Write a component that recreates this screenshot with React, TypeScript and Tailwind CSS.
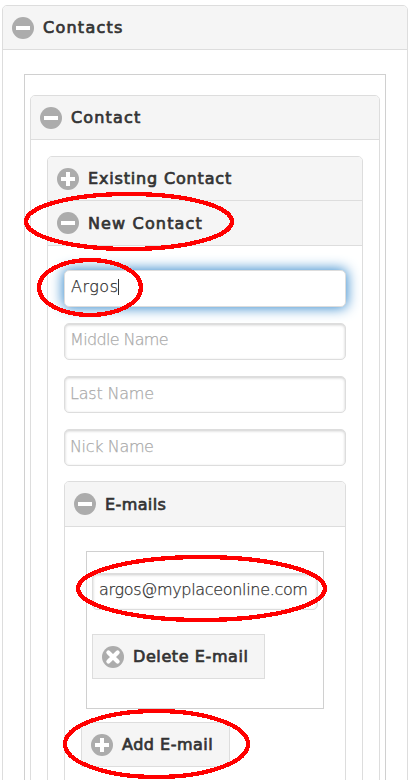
import type { ReactNode } from "react";

type Glyph = "minus" | "plus" | "delete";

function CircleIcon({ glyph }: { glyph: Glyph }) {
  return (
    <svg width="22" height="22" viewBox="0 0 22 22" className="shrink-0" aria-hidden="true">
      <circle cx="11" cy="11" r="11" fill="#acacac" />
      {glyph === "minus" && <path d="M4 9h14v4H4z" fill="#fff" />}
      {glyph === "plus" && <path d="M9 4h4v5h5v4h-5v5H9v-5H4V9h5z" fill="#fff" />}
      {glyph === "delete" && (
        <path d="M6.4 6.4 15.6 15.6M15.6 6.4 6.4 15.6" stroke="#fff" strokeWidth="4.2" strokeLinecap="round" />
      )}
    </svg>
  );
}

function Heading({ glyph, className, children }: { glyph: Glyph; className: string; children: ReactNode }) {
  return (
    <div
      className={`flex items-center gap-[9px] whitespace-nowrap bg-[#f5f5f5] pl-[9px] text-[#333] [-webkit-text-stroke:0.7px_#333] ${className}`}
    >
      <CircleIcon glyph={glyph} />
      {children}
    </div>
  );
}

function Field({
  value,
  placeholder,
  focused = false,
  className,
}: {
  value?: string;
  placeholder?: string;
  focused?: boolean;
  className: string;
}) {
  return (
    <div
      className={`flex h-[37px] items-center whitespace-nowrap rounded-[5px] border border-[#ddd] bg-white font-extralight ${
        focused ? "shadow-[0_0_13px_1px_#3388cc]" : "shadow-[inset_0_1px_3px_rgba(0,0,0,0.2)]"
      } ${
        value
          ? "pl-[6px] text-[#333] [-webkit-text-stroke:0.25px_#333]"
          : "pl-[5px] text-[#aaa] [-webkit-text-stroke:0.25px_#aaa]"
      } ${className}`}
    >
      <span>{value ?? placeholder}</span>
      {focused && <span className="h-4 w-px bg-[#333]" />}
    </div>
  );
}

export default function App() {
  return (
    <div className="relative h-[780px] w-[413px] overflow-hidden bg-white pl-[2px] pt-[5px] font-['DejaVu_Sans',sans-serif] text-[16px] leading-5">
      <div className="h-[800px] w-[406px] rounded-t-[5px] border border-[#ddd]">
        <Heading glyph="minus" className="h-11 rounded-t-[4px] border-b border-[#ddd] tracking-[1.25px]">Contacts</Heading>
        <div className="ml-[21px] mt-6 h-[740px] w-[362px] border border-[#d0d0d0] pl-[5px] pt-5">
          <div className="h-[720px] w-[350px] rounded-t-[5px] border border-[#ddd]">
            <Heading glyph="minus" className="h-11 rounded-t-[4px] border-b border-[#ddd] tracking-[1.15px]">Contact</Heading>
            <div className="ml-4 mt-4 h-[660px] w-[316px] rounded-t-[5px] border border-[#ddd]">
              <Heading glyph="plus" className="h-11 rounded-t-[4px] border-b border-[#ddd] tracking-[0.83px]">Existing Contact</Heading>
              <Heading glyph="minus" className="h-[45px] border-b border-[#ddd] tracking-[1.15px]">
                <span className="pt-[2px]">New Contact</span>
              </Heading>
              <div className="ml-4 mt-6 flex w-[282px] flex-col">
                <div className="flex flex-col gap-4">
                  <Field value="Argos" focused className="pb-[3px] tracking-[0.5px]" />
                  <Field placeholder="Middle Name" className="pb-[3px] tracking-[-0.65px]" />
                  <Field placeholder="Last Name" className="pb-px tracking-[-0.2px]" />
                  <Field placeholder="Nick Name" className="pb-px tracking-[-0.35px]" />
                </div>
                <div className="mt-[15px] h-[400px] rounded-t-[5px] border border-[#ddd]">
                  <Heading glyph="minus" className="h-[45px] rounded-t-[4px] border-b border-[#ddd] tracking-[0.4px]">
                    <span className="pt-[2px]">E-mails</span>
                  </Heading>
                  <div className="ml-[21px] mt-6 h-[158px] w-[238px] border border-[#d0d0d0] px-[5px] pt-[21px]">
                    <Field value="argos@myplaceonline.com" className="pb-[3px] tracking-[-0.32px]" />
                    <Heading glyph="delete" className="mt-6 h-[45px] w-[173px] border border-[#ddd] tracking-[0.6px]">Delete E-mail</Heading>
                  </div>
                  <Heading glyph="plus" className="ml-4 mt-[13px] h-[45px] w-[149px] border border-[#ddd] tracking-[0.5px]">Add E-mail</Heading>
                </div>
              </div>
            </div>
          </div>
        </div>
      </div>

      {/* Red callout rings over the form */}
      <svg
        className="pointer-events-none absolute left-0 top-0"
        width="413"
        height="780"
        fill="none"
        stroke="#f00"
        strokeWidth="4.3"
        shapeRendering="crispEdges"
        aria-hidden="true"
      >
        <ellipse cx="129" cy="221.5" rx="103" ry="27.5" />
        <ellipse cx="90" cy="287.5" rx="51" ry="27.5" />
        <ellipse cx="201.5" cy="588.5" rx="123.5" ry="31.5" />
        <ellipse cx="156.5" cy="744" rx="91.5" ry="33" />
      </svg>
    </div>
  );
}
